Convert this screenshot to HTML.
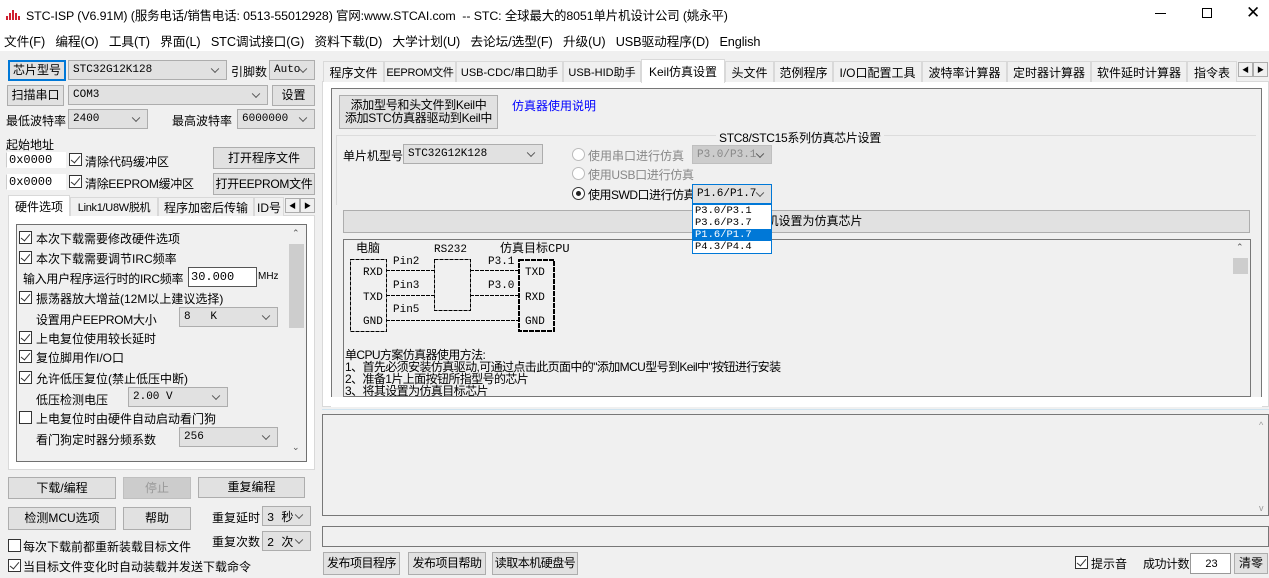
<!DOCTYPE html>
<html><head><meta charset="utf-8"><style>
*{box-sizing:border-box;margin:0;padding:0}
body{width:1269px;height:578px;overflow:hidden;background:#f0f0f0;position:relative;font-family:"Liberation Sans","Noto Sans CJK SC",sans-serif;font-size:12px;color:#000}
.a{position:absolute;white-space:nowrap}
.btn{position:absolute;background:#e1e1e1;border:1px solid #adadad;display:flex;align-items:center;justify-content:center;font-size:12px;line-height:1.05;text-align:center;white-space:nowrap;overflow:hidden}
.cb{position:absolute;background:#e1e1e1;border:1px solid #adadad;padding-left:4px;display:flex;align-items:center;font-size:11px;font-family:"Liberation Mono","Noto Sans CJK SC",monospace;white-space:nowrap}
.cb::after{content:"";position:absolute;right:8px;top:50%;width:5px;height:5px;border-right:1px solid #555;border-bottom:1px solid #555;transform:translateY(-70%) rotate(45deg)}
.inp{position:absolute;background:#fff;border:1px solid #7a7a7a;padding-left:2px;display:flex;align-items:center;font-size:12px;font-family:"Liberation Mono",monospace}
.chk{position:absolute;width:13px;height:13px;border:1px solid #333;background:#fff}
.chk.on::after{content:"";position:absolute;left:3px;top:0px;width:4px;height:8px;border-right:1.3px solid #333;border-bottom:1.3px solid #333;transform:rotate(40deg)}
.t{position:absolute;white-space:nowrap;font-size:12px}
.tab{position:absolute;top:61px;height:21px;border:1px solid #d9d9d9;border-bottom:none;background:#f0f0f0;display:flex;align-items:center;justify-content:center;font-size:12px;white-space:nowrap}
.ltab{position:absolute;top:197px;height:19px;border:1px solid #d9d9d9;border-bottom:none;background:#f0f0f0;display:flex;align-items:center;justify-content:center;font-size:12px;white-space:nowrap}
.arr{position:absolute;width:15px;height:15px;border:1px solid #adadad;background:#f0f0f0;font-size:7px;display:flex;align-items:center;justify-content:center}
.radio{position:absolute;width:13px;height:13px;border-radius:50%;border:1px solid #333;background:#fff}
</style></head><body>
<!-- title bar -->
<div class="a" style="left:0;top:0;width:1269px;height:51px;background:#fff"></div>
<svg class="a" style="left:6px;top:7px" width="14" height="14"><path d="M1 13 L1 9 M4 13 L4 6 M7 13 L7 3 M10 13 L10 6 M13 13 L13 9" stroke="#d02030" stroke-width="2"/></svg>
<div class="t" style="left:26px;top:6px;font-size:12.4px;letter-spacing:-0.1px">STC-ISP (V6.91M) (服务电话/销售电话: 0513-55012928) 官网:www.STCAI.com &nbsp;-- STC: 全球最大的8051单片机设计公司 (姚永平)</div>
<div class="a" style="left:1155px;top:13px;width:11px;height:1px;background:#000"></div>
<div class="a" style="left:1202px;top:8px;width:10px;height:10px;border:1px solid #000"></div>
<div class="t" style="left:1246px;top:3px;font-size:17px;font-weight:100">✕</div>
<div class="t" style="left:4px;top:31px;font-size:12.7px;letter-spacing:-0.1px">文件(F)&nbsp;&nbsp;&nbsp;编程(O)&nbsp;&nbsp;&nbsp;工具(T)&nbsp;&nbsp;&nbsp;界面(L)&nbsp;&nbsp;&nbsp;STC调试接口(G)&nbsp;&nbsp;&nbsp;资料下载(D)&nbsp;&nbsp;&nbsp;大学计划(U)&nbsp;&nbsp;&nbsp;去论坛/选型(F)&nbsp;&nbsp;&nbsp;升级(U)&nbsp;&nbsp;&nbsp;USB驱动程序(D)&nbsp;&nbsp;&nbsp;English</div>

<!-- left top -->
<div class="btn" style="left:8px;top:60px;width:58px;height:21px;border:2px solid #0078d7">芯片型号</div>
<div class="cb" style="left:68px;top:60px;width:159px;height:20px">STC32G12K128</div>
<div class="t" style="left:231px;top:63px">引脚数</div>
<div class="cb" style="left:269px;top:60px;width:46px;height:20px">Auto</div>
<div class="btn" style="left:7px;top:85px;width:57px;height:21px">扫描串口</div>
<div class="cb" style="left:68px;top:85px;width:200px;height:20px">COM3</div>
<div class="btn" style="left:272px;top:85px;width:43px;height:21px">设置</div>
<div class="t" style="left:6px;top:112px">最低波特率</div>
<div class="cb" style="left:68px;top:109px;width:80px;height:20px">2400</div>
<div class="t" style="left:172px;top:112px">最高波特率</div>
<div class="cb" style="left:237px;top:109px;width:78px;height:20px">6000000</div>
<div class="t" style="left:6px;top:136px">起始地址</div>
<div class="inp" style="left:6px;top:152px;width:60px;height:16px;border-color:#fff;border-left-color:#ccc">0x0000</div>
<div class="chk on" style="left:69px;top:153px"></div>
<div class="t" style="left:85px;top:153px">清除代码缓冲区</div>
<div class="btn" style="left:213px;top:147px;width:102px;height:22px">打开程序文件</div>
<div class="inp" style="left:6px;top:174px;width:60px;height:16px;border-color:#fff;border-left-color:#ccc">0x0000</div>
<div class="chk on" style="left:69px;top:175px"></div>
<div class="t" style="left:85px;top:175px;letter-spacing:-0.3px">清除EEPROM缓冲区</div>
<div class="btn" style="left:213px;top:173px;width:102px;height:22px;letter-spacing:-0.3px">打开EEPROM文件</div>

<!-- left tabs -->
<div class="a" style="left:8px;top:215px;width:307px;height:255px;background:#fff;border:1px solid #d9d9d9"></div>
<div class="ltab" style="left:8px;top:195px;width:62px;height:21px;background:#fff">硬件选项</div>
<div class="ltab" style="left:70px;width:88px;font-size:11px;letter-spacing:-0.3px">Link1/U8W脱机</div>
<div class="ltab" style="left:158px;width:96px">程序加密后传输</div>
<div class="ltab" style="left:254px;width:30px">ID号</div>
<div class="arr" style="left:285px;top:198px">◀</div><div class="arr" style="left:300px;top:198px">▶</div>
<div class="a" style="left:16px;top:224px;width:291px;height:238px;background:#f0f0f0;border:1px solid #707070"></div>
<div class="a" style="left:288px;top:225px;width:18px;height:236px;background:#f0f0f0"></div>
<div class="a" style="left:289px;top:244px;width:15px;height:84px;background:#cdcdcd"></div>
<div class="t" style="left:292px;top:228px;font-size:9px;color:#555">⌃</div>
<div class="t" style="left:292px;top:442px;font-size:9px;color:#555">⌄</div>

<div class="chk on" style="left:19px;top:231px"></div><div class="t" style="left:36px;top:230px">本次下载需要修改硬件选项</div>
<div class="chk on" style="left:19px;top:251px"></div><div class="t" style="left:36px;top:250px">本次下载需要调节IRC频率</div>
<div class="t" style="left:23px;top:270px;letter-spacing:-0.3px">输入用户程序运行时的IRC频率</div>
<div class="inp" style="left:188px;top:267px;width:69px;height:20px;border-color:#555">30.000</div>
<div class="t" style="left:258px;top:271px;font-size:10px">MHz</div>
<div class="chk on" style="left:19px;top:291px"></div><div class="t" style="left:36px;top:290px">振荡器放大增益(12M以上建议选择)</div>
<div class="t" style="left:36px;top:311px;letter-spacing:-0.3px">设置用户EEPROM大小</div>
<div class="cb" style="left:179px;top:307px;width:99px;height:20px">8&nbsp;&nbsp;&nbsp;K</div>
<div class="chk on" style="left:19px;top:331px"></div><div class="t" style="left:36px;top:330px">上电复位使用较长延时</div>
<div class="chk on" style="left:19px;top:350px"></div><div class="t" style="left:36px;top:349px">复位脚用作I/O口</div>
<div class="chk on" style="left:19px;top:371px"></div><div class="t" style="left:36px;top:370px">允许低压复位(禁止低压中断)</div>
<div class="t" style="left:36px;top:391px">低压检测电压</div>
<div class="cb" style="left:128px;top:387px;width:100px;height:20px">2.00 V</div>
<div class="chk" style="left:19px;top:411px"></div><div class="t" style="left:36px;top:410px">上电复位时由硬件自动启动看门狗</div>
<div class="t" style="left:36px;top:431px">看门狗定时器分频系数</div>
<div class="cb" style="left:179px;top:427px;width:99px;height:20px">256</div>

<!-- bottom left -->
<div class="btn" style="left:8px;top:477px;width:108px;height:22px">下载/编程</div>
<div class="btn" style="left:123px;top:477px;width:68px;height:22px;background:#ccc;border-color:#bfbfbf;color:#999">停止</div>
<div class="btn" style="left:198px;top:477px;width:107px;height:21px">重复编程</div>
<div class="btn" style="left:8px;top:507px;width:108px;height:23px">检测MCU选项</div>
<div class="btn" style="left:123px;top:507px;width:68px;height:23px">帮助</div>
<div class="t" style="left:212px;top:509px">重复延时</div>
<div class="cb" style="left:262px;top:506px;width:49px;height:20px;font-size:12px">3 秒</div>
<div class="t" style="left:212px;top:533px">重复次数</div>
<div class="cb" style="left:262px;top:531px;width:49px;height:20px;font-size:12px">2 次</div>
<div class="chk" style="left:8px;top:539px"></div><div class="t" style="left:23px;top:538px">每次下载前都重新装载目标文件</div>
<div class="chk on" style="left:8px;top:559px"></div><div class="t" style="left:23px;top:558px">当目标文件变化时自动装载并发送下载命令</div>

<!-- right tabs -->
<div class="a" style="left:322px;top:81px;width:947px;height:326px;background:#fff;border:1px solid #d9d9d9"></div>
<div class="tab" style="left:323px;width:61px">程序文件</div>
<div class="tab" style="left:384px;width:72px;font-size:11px;letter-spacing:-0.3px">EEPROM文件</div>
<div class="tab" style="left:456px;width:107px;font-size:11px">USB-CDC/串口助手</div>
<div class="tab" style="left:563px;width:78px;font-size:11px">USB-HID助手</div>
<div class="tab" style="left:641px;top:59px;width:84px;height:24px;background:#fff;border-color:#d9d9d9">Keil仿真设置</div>
<div class="tab" style="left:725px;width:49px">头文件</div>
<div class="tab" style="left:774px;width:59px">范例程序</div>
<div class="tab" style="left:833px;width:89px">I/O口配置工具</div>
<div class="tab" style="left:922px;width:85px">波特率计算器</div>
<div class="tab" style="left:1007px;width:84px">定时器计算器</div>
<div class="tab" style="left:1091px;width:96px">软件延时计算器</div>
<div class="tab" style="left:1187px;width:50px">指令表</div>
<div class="arr" style="left:1238px;top:62px">◀</div><div class="arr" style="left:1253px;top:62px">▶</div>

<div class="a" style="left:331px;top:88px;width:931px;height:310px;background:#f0f0f0;border:1px solid #777"></div>
<div class="btn" style="left:339px;top:95px;width:159px;height:34px;line-height:1.1;font-size:12px;letter-spacing:-0.3px">添加型号和头文件到Keil中<br>添加STC仿真器驱动到Keil中</div>
<div class="t" style="left:512px;top:97px;color:#0000ff">仿真器使用说明</div>
<div class="a" style="left:336px;top:135px;width:920px;height:1px;background:#dcdcdc"></div>
<div class="a" style="left:336px;top:135px;width:1px;height:70px;background:#dcdcdc"></div>
<div class="t" style="left:716px;top:129px;background:#f0f0f0;padding:0 3px;font-size:12px;letter-spacing:-0.3px">STC8/STC15系列仿真芯片设置</div>
<div class="t" style="left:343px;top:147px">单片机型号</div>
<div class="cb" style="left:403px;top:144px;width:140px;height:20px">STC32G12K128</div>
<div class="radio" style="left:572px;top:148px;border-color:#bbb"></div>
<div class="t" style="left:588px;top:147px;color:#888">使用串口进行仿真</div>
<div class="cb" style="left:692px;top:145px;width:80px;height:19px;background:#ccc;border-color:#bfbfbf;color:#888">P3.0/P3.1</div>
<div class="radio" style="left:572px;top:167px;border-color:#bbb"></div>
<div class="t" style="left:588px;top:166px;color:#888;letter-spacing:-0.3px">使用USB口进行仿真</div>
<div class="radio" style="left:572px;top:187px"><div style="position:absolute;left:3px;top:3px;width:5px;height:5px;border-radius:50%;background:#222"></div></div>
<div class="t" style="left:588px;top:186px;letter-spacing:-0.5px">使用SWD口进行仿真</div>
<div class="cb" style="left:692px;top:184px;width:80px;height:20px;border-color:#0078d7">P1.6/P1.7</div>
<div class="btn" style="left:343px;top:210px;width:907px;height:23px;background:#e1e1e1">将单片机设置为仿真芯片</div>

<div class="a" style="left:343px;top:239px;width:908px;height:159px;background:#f0f0f0;border:1px solid #777;border-bottom:none"></div>
<svg class="a" style="left:0;top:0" width="1269" height="578">
<g font-family="Liberation Mono,Noto Sans CJK SC,monospace" font-size="11" fill="#000">
<text x="356" y="252" font-size="12">电脑</text>
<text x="434" y="252">RS232</text>
<text x="500" y="252" font-size="12">仿真目标CPU</text>
<text x="393" y="264">Pin2</text><text x="393" y="288">Pin3</text><text x="393" y="312">Pin5</text>
<text x="488" y="264">P3.1</text><text x="488" y="288">P3.0</text>
<text x="363" y="275">RXD</text><text x="363" y="300">TXD</text><text x="363" y="324">GND</text>
<text x="525" y="275">TXD</text><text x="525" y="300">RXD</text><text x="525" y="324">GND</text>
</g>
<g stroke="#000" stroke-width="1" fill="none" stroke-dasharray="4 1">
<rect x="350.5" y="259.5" width="36" height="72"/>
<rect x="434.5" y="259.5" width="36" height="51"/>
<path d="M386 270.5H434M386 295.5H434M470 270.5H519M470 295.5H519M386 320.5H519"/>
</g>
<rect x="519" y="260" width="35" height="71" fill="none" stroke="#000" stroke-width="2" stroke-dasharray="5 1"/>
</svg>
<div class="a" style="left:345px;top:349px;font-size:12px;line-height:12px;letter-spacing:-0.6px">单CPU方案仿真器使用方法:<br>1、首先必须安装仿真驱动,可通过点击此页面中的"添加MCU型号到Keil中"按钮进行安装<br>2、准备1片上面按钮所指型号的芯片<br>3、将其设置为仿真目标芯片</div>
<div class="a" style="left:331px;top:397px;width:931px;height:10px;background:#fff"></div>
<div class="a" style="left:343px;top:396px;width:908px;height:1px;background:#777"></div>
<div class="a" style="left:1232px;top:240px;width:18px;height:156px;background:#f0f0f0"></div>
<div class="a" style="left:1233px;top:258px;width:15px;height:16px;background:#cdcdcd"></div>
<div class="t" style="left:1236px;top:242px;font-size:9px;color:#555">⌃</div>

<!-- dropdown list (on top) -->
<div class="a" style="left:692px;top:204px;width:80px;height:50px;background:#fff;border:1px solid #0078d7;font-family:'Liberation Mono',monospace;font-size:10.5px;line-height:12px">
<div style="padding-left:2px">P3.0/P3.1</div><div style="padding-left:2px">P3.6/P3.7</div><div style="padding-left:2px;background:#0078d7;color:#fff">P1.6/P1.7</div><div style="padding-left:2px">P4.3/P4.4</div></div>

<!-- lower right -->
<div class="a" style="left:322px;top:409px;width:947px;height:1px;background:#cfe3ef"></div>
<div class="a" style="left:322px;top:414px;width:947px;height:102px;background:#f0f0f0;border:1px solid #777"></div>
<div class="t" style="left:1259px;top:420px;font-size:9px;color:#999">^</div>
<div class="t" style="left:1259px;top:503px;font-size:9px;color:#999">v</div>
<div class="a" style="left:322px;top:526px;width:947px;height:21px;background:#f0f0f0;border:1px solid #777"></div>
<div class="btn" style="left:323px;top:552px;width:77px;height:23px;letter-spacing:-0.5px">发布项目程序</div>
<div class="btn" style="left:408px;top:552px;width:78px;height:23px;letter-spacing:-0.5px">发布项目帮助</div>
<div class="btn" style="left:492px;top:552px;width:86px;height:23px;letter-spacing:-0.5px">读取本机硬盘号</div>
<div class="chk on" style="left:1075px;top:556px"></div>
<div class="t" style="left:1091px;top:555px">提示音</div>
<div class="t" style="left:1143px;top:555px;letter-spacing:-0.5px">成功计数</div>
<div class="inp" style="left:1190px;top:553px;width:41px;height:21px;justify-content:center;font-family:'Liberation Sans',sans-serif;font-size:11px;border-color:#999">23</div>
<div class="btn" style="left:1234px;top:553px;width:34px;height:21px">清零</div>
</body></html>
